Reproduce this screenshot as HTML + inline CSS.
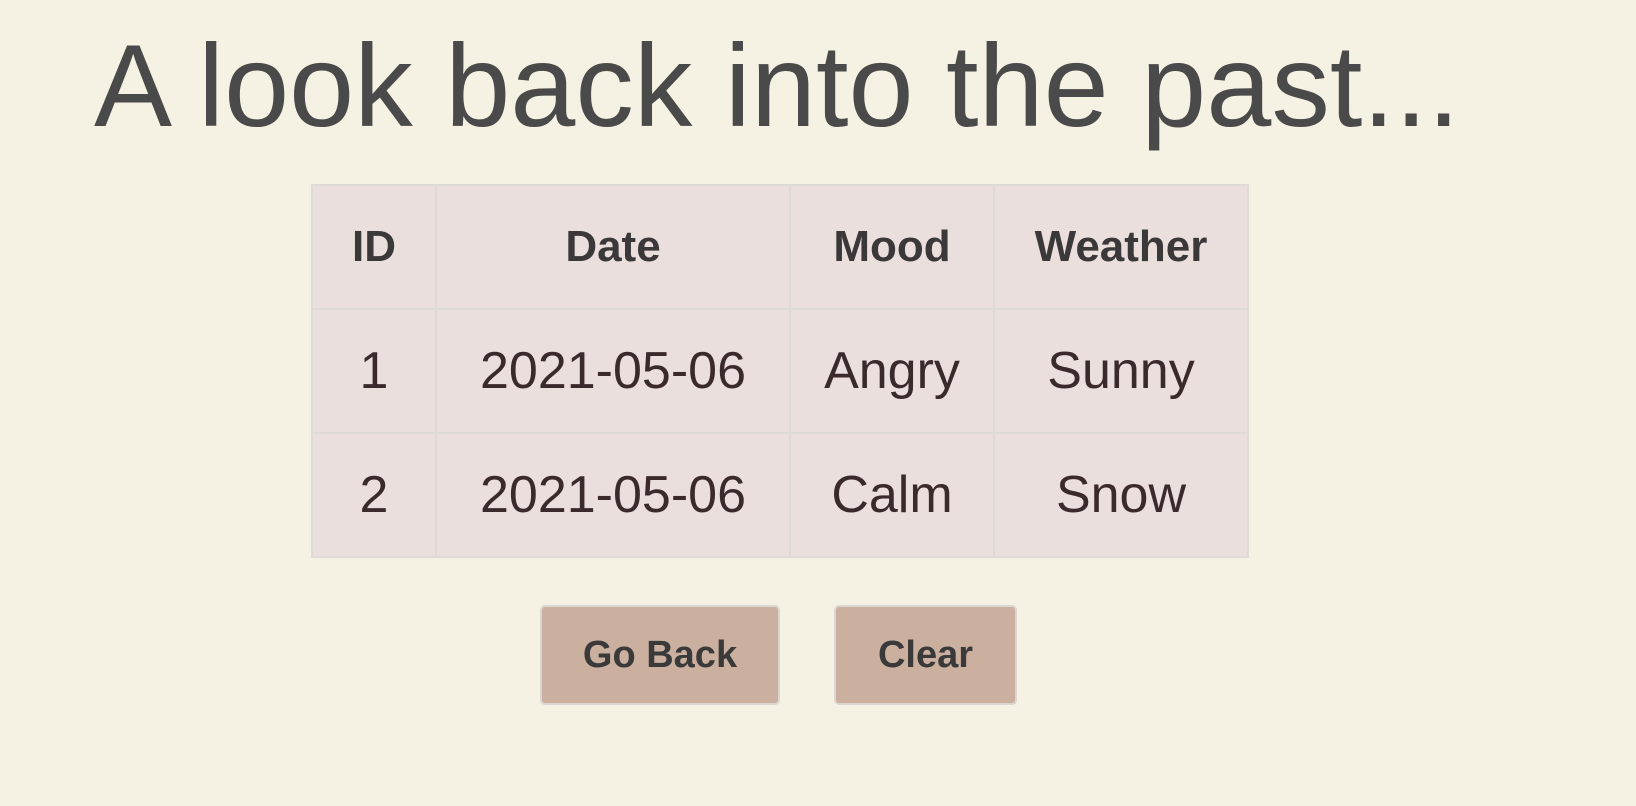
<!DOCTYPE html>
<html><head><meta charset="utf-8"><style>
html,body{margin:0;padding:0;}
body{width:1636px;height:806px;background:#f6f2e3;position:relative;overflow:hidden;font-family:"Liberation Sans",sans-serif;}
h1{position:absolute;left:94px;margin:0;font-weight:normal;font-size:117px;line-height:170px;color:#4a4a4a;white-space:nowrap;top:1px;}
table{position:absolute;left:311px;top:184px;border-collapse:collapse;background:#eadfdc;}
td,th{border:2px solid #dedad8;text-align:center;height:122px;padding:0;color:#3b2a2c;font-size:52px;}
th{font-size:44px;font-weight:bold;color:#3a3838;}
.btn{position:absolute;top:605px;height:100px;background:#cbb0a0;border:2px solid #dcd6d0;border-radius:5px;box-sizing:border-box;font-weight:bold;font-size:38px;color:#3a3a3a;display:flex;align-items:center;justify-content:center;}
</style></head><body>
<h1>A look back into the past...</h1>
<table>
<tr><th style="width:122px">ID</th><th style="width:352px">Date</th><th style="width:202px">Mood</th><th style="width:252px">Weather</th></tr>
<tr><td>1</td><td>2021-05-06</td><td>Angry</td><td>Sunny</td></tr>
<tr><td>2</td><td>2021-05-06</td><td>Calm</td><td>Snow</td></tr>
</table>
<div class="btn" style="left:540px;width:240px;">Go Back</div>
<div class="btn" style="left:834px;width:183px;">Clear</div>
</body></html>
